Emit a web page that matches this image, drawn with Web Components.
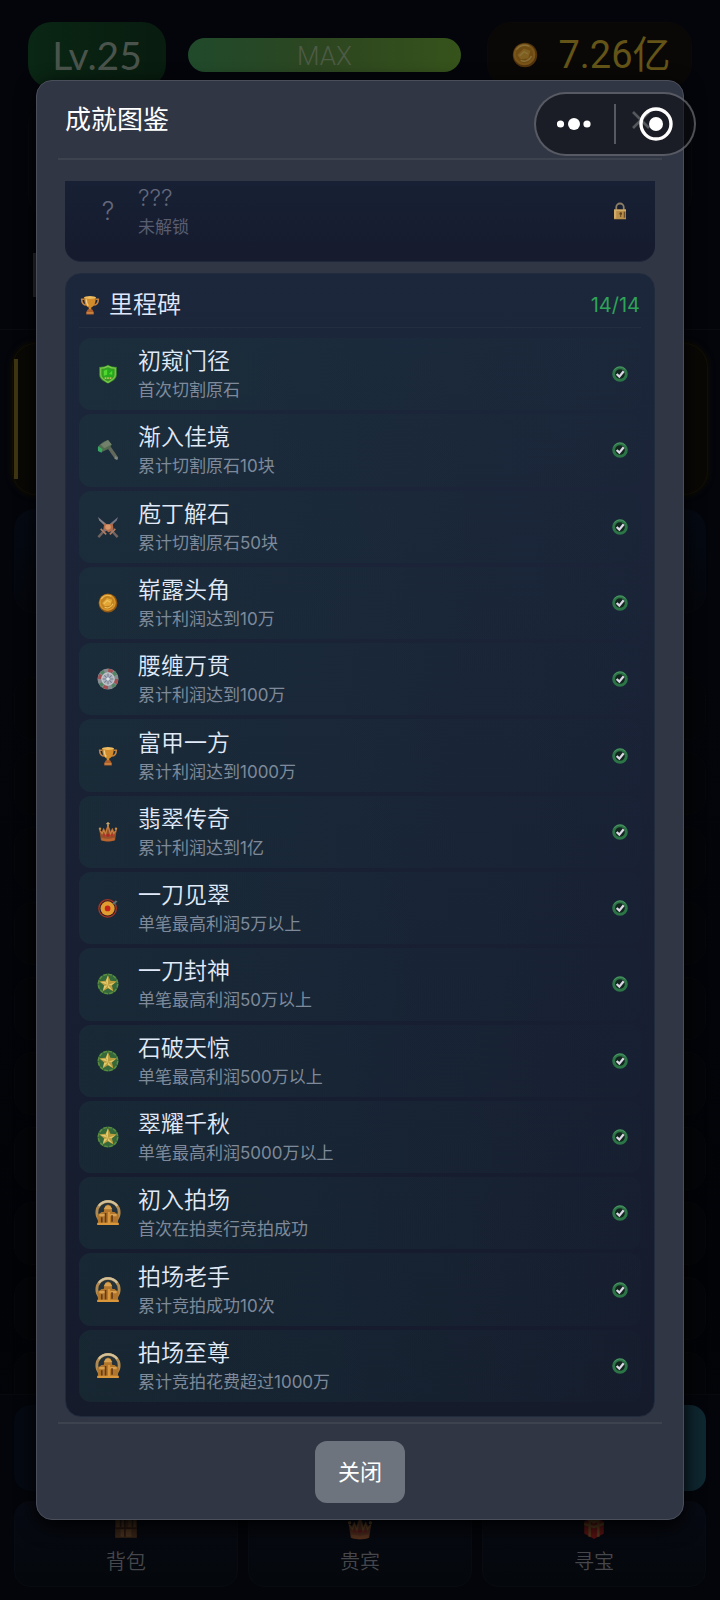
<!DOCTYPE html>
<html lang="zh-CN">
<head>
<meta charset="utf-8">
<meta name="viewport" content="width=device-width, initial-scale=1">
<title>成就图鉴</title>
<style>
  html, body { margin: 0; height: 100%; background: #04050a; }
  body { font-family: Inter, "Noto Sans CJK SC", sans-serif; font-weight: 350; overflow: hidden; }
</style>
</head>
<body>
<game-app></game-app>
<script>
const define = (name, html, setup) => {
  const template = document.createElement('template');
  template.innerHTML = html;
  customElements.define(name, class extends HTMLElement {
    connectedCallback() {
      if (this.shadowRoot) return;
      this.attachShadow({ mode: 'open' }).append(template.content.cloneNode(true));
      if (setup) setup(this, this.shadowRoot);
    }
  });
};

const star = `<circle cx="12" cy="12" r="11.500" fill="#35683a"/><circle cx="12" cy="12" r="10.500" fill="none" stroke="#5b8e40" stroke-width="1.6" stroke-dasharray="4 1.500"/>
  <path d="M12 2.200l2.600 6.300 7 .5-5.300 4.500 1.600 6.700-5.900-3.500-5.900 3.500 1.600-6.700L2.400 9l7-.5z" fill="#b99c3c"/><path d="M12 3v10L9.700 9zm0 10l8.500-3.300-5 3.700zm0 0l5 6-5-3zm0 0l-5.200 6.200 1-5zm0 0L3.500 9.700 9 9.500z" fill="#e0ca70"/>`;
const house = `<circle cx="12" cy="11.500" r="10.300" fill="#263239" stroke="#b08a50" stroke-width="2.600"/><path d="M3.500 5.500A10.600 10.600 0 0 1 20.500 5.500" fill="none" stroke="#d2c19b" stroke-width="2"/>
  <path d="M2 14l4-3h2l1-4 3-3 3 3 1 4h2l4 3-1 8H3z" fill="#b1762b"/><path d="M8 8.500h8l-2-3.500h-4zM4 13h6v2H4zm10 0h6v2h-6z" fill="#d9a04d"/><path d="M9 12h1.500v9H9zm6 2h1.500v6H15zM5.500 16H7v5H5.500z" fill="#653a18"/><path d="M12 11h2v11h-2zM2 21h20v2H2z" fill="#d9963a"/>`;
const cup = `<path d="M5 5H2c0 5 2.500 7 6 7M19 5h3c0 5-2.500 7-6 7" fill="none" stroke="#c08040" stroke-width="1.900"/><path d="M5 2.500h14c0 7-2 11.500-5.500 12.500v3h-3v-3C7 14 5 9.500 5 2.500z" fill="#d38c2b"/><ellipse cx="12" cy="3" rx="7" ry="1.700" fill="#edbb60"/><path d="M7.500 5c.2 4 1 6.500 2.500 8" fill="none" stroke="#f2cd83" stroke-width="1.600"/><path d="M9.500 17h5l2 3.500v3h-9v-3z" fill="#ad5e2b"/><path d="M8 20.500h8v2H8z" fill="#cb8440"/>`;
const crown = `<path d="M1.500 9l3 2 2-4 2 4 3.500-9 3.500 9 2-4 2 4 3-2-2 13c-5 2-12 2-17 0z" fill="#95502b"/><path d="M2 10l3 4 2-5 2 6 3-10 3 10 2-6 2 5 3-4" fill="none" stroke="#c5813f" stroke-width="1.300"/><path d="M12 0v5M10 2h4" stroke="#c9a66d" stroke-width="1.500"/><circle cx="2.400" cy="8" r="1.500" fill="#c78d48"/><circle cx="21.600" cy="8" r="1.500" fill="#c78d48"/><path d="M4 18.500c5 2 11 2 16 0v3.500c-5 1.500-11 1.500-16 0z" fill="#b8652f"/><circle cx="12" cy="16" r="1.800" fill="#ad2823"/><circle cx="7.500" cy="16" r="1.500" fill="#ba3028"/><circle cx="16.500" cy="16" r="1.500" fill="#ba3028"/>`;
const ICONS = {
  star, house, cup, crown,
  shield: `<path d="M12 1c3 2 6 2.500 10.500 2.500V13c0 5-5 8-10.500 10.500C6.500 21 1.500 18 1.500 13V3.500C6 3.500 9 3 12 1z" fill="#3f9527"/><path d="M12 2.800c3 1.700 5.500 2.200 8.700 2.300V13c0 4-4.400 6.800-8.700 9-4.300-2.200-8.700-5-8.700-9V5.100C6.500 5 9 4.500 12 2.800z" fill="none" stroke="#79c94c" stroke-width="1.500"/><path d="M5.500 7l6.500-2 6.500 2v8L12 18l-6.500-3z" fill="#27aa1d"/><path d="M7 8l4-1.500V13l-4 1zM13 12l4-4v5z" fill="#52d630"/><path d="M8 16h2v2H8zm3 0h2v2h-2zm3 0h2v2h-2z" fill="#b5c358"/>`,
  hammer: `<path d="M12 11l3-2.500L23 20l-1 2.500-2.500-1z" fill="#62685c"/><path d="M20 18.500l3 2-1 2.500-3-1.500z" fill="#7b8880"/><path d="M1 9c2-4 7-7 11-8l4 5-2 4-8 4-5-2z" fill="#536a4f"/><path d="M4 6l8-5 4 5-8 4z" fill="#72816b"/><path d="M1 8l5 3-1 4-4-2z" fill="#37a862"/>`,
  swords: `<path d="M1 1l18 15-2.500 2.500L2.500 5z" fill="#85818a"/><path d="M23 1L5 16l2.500 2.500L21.500 5z" fill="#737685"/><path d="M1.500 23l6.500-7M22.500 23L16 16" stroke="#736360" stroke-width="2.600"/><path d="M4 14l6 6M20 14l-6 6" stroke="#b07c62" stroke-width="1.800"/><path d="M8 8l4 1.500L17 8l1 6-5 4-6-4z" fill="#b36c49"/><circle cx="12" cy="12" r="3" fill="#d8976b"/>`,
  coin: `<circle cx="12" cy="12" r="11.300" fill="#8d5716"/><circle cx="11.500" cy="11.500" r="10" fill="#d6942a"/><circle cx="11.500" cy="11.500" r="8" fill="#c1821f"/><path d="M5 12l6-6 6 2-2 7-7 1z" fill="#e1a636"/><path d="M4 7c3-4 8-5 12-3M7 13l4-4 4 2M8 17c4 2 8 0 10-4" fill="none" stroke="#efc45f" stroke-width="1.300"/>`,
  chip: `<circle cx="12" cy="12" r="11.500" fill="#868c8f"/><circle cx="12" cy="12" r="9.300" fill="none" stroke="#a34e51" stroke-width="3.500" stroke-dasharray="5 9.600"/><circle cx="12" cy="12" r="9.300" fill="none" stroke="#4f8562" stroke-width="3.500" stroke-dasharray="4 10.600" stroke-dashoffset="-6"/><circle cx="12" cy="12" r="6.700" fill="#aeb3bc" stroke="#d2d6da"/><path d="M12 6v12M6 12h12M8 8l8 8M16 8l-8 8" stroke="#727e94" stroke-width="1.100"/><circle cx="12" cy="12" r="2" fill="#dfe3e6"/>`,
  target: `<circle cx="11.500" cy="12.500" r="10.500" fill="#35191e" stroke="#a43528" stroke-width="1.600"/><circle cx="11.500" cy="12.500" r="8.500" fill="#e09c30"/><circle cx="11.500" cy="12.500" r="3.400" fill="#c4241c"/><path d="M17 7l4-4 2.500 1-4 4z" fill="#65706b"/>`,
  check: `<circle cx="12" cy="12" r="9.500" fill="#13251f" stroke="#2c7547" stroke-width="4.400"/><path d="M3 6.500A10.600 10.600 0 0 1 20 5" fill="none" stroke="#4f9466" stroke-width="1.500"/><path d="M7 12l4 4 6.500-8" fill="none" stroke="#ddd8e8" stroke-width="3.400"/>`,
  lock: `<path d="M7 12V7a5 5 0 0 1 10 0v5" fill="none" stroke="#8b7f66" stroke-width="2.400"/><path d="M4 10h16v13H4z" fill="#b98e49"/><path d="M4 10h16v2H4zM4 12h3v10H4z" fill="#d0ac68"/><circle cx="13" cy="15.500" r="1.800" fill="#5c4021"/><path d="M12.200 16h1.500v4h-1.500zM17 13h2v8h-2z" fill="#6c4d28"/>`,
  bag: `<path d="M2 2h20v20H2z" fill="#6f431f"/><path d="M3 5h7v8H3zm11 0h7v8h-7zM7 14h10v7H7z" fill="#95602f"/><path d="M11 2v19M2 13h20M7 4v8M18 4v8" stroke="#49250e" stroke-width="1.500"/>`,
  gift: `<path d="M3 7l9-5 9 5v11l-9 5-9-5z" fill="#b91f18"/><path d="M8 4v17M16 4v17M3 9l9 3 9-3" fill="none" stroke="#b17a2d" stroke-width="2.200"/><path d="M12 9L5 5l3-4 4 5 4-5 3 4z" fill="#bf842b"/>`
};

define('game-icon', `<style>:host{display:block;width:20px;height:20px;flex:none}svg{display:block;width:100%;height:100%}</style><svg viewBox="0 0 24 24" aria-hidden="true"></svg>`,
  (host, root) => { root.querySelector('svg').innerHTML = ICONS[host.getAttribute('name')]; });

define('player-status', `<style>
  :host{display:flex;align-items:center;gap:22px;padding:22px 28px 0}
  .level,.money{box-sizing:border-box;height:66px;border-radius:24px;display:flex;align-items:center;justify-content:center}
  .level{width:138px;background:linear-gradient(90deg,#0a2614,#081c0f);color:#4a544c;font:400 39px/66px Lato,sans-serif}
  .bar{flex:1;height:34px;border-radius:17px;background:linear-gradient(90deg,#204a2b,#2d4620 50%,#36531b);text-align:center;color:#4e5b46;font:300 26px/36px Roboto,sans-serif}
  .money{width:205px;margin-left:4px;padding-left:4px;background:#090806;border:1px solid #0c0a07;gap:20px;color:#645417;font:400 38px/66px Roboto,"Noto Sans CJK SC",sans-serif}
  game-icon{width:26px;height:26px;opacity:.55}
</style><div class="level">Lv.25</div><div class="bar">MAX</div><div class="money"><game-icon name="coin"></game-icon><span>7.26亿</span></div>`);

define('game-tab', `<style>
  :host{display:block;flex:1}
  button{box-sizing:border-box;width:100%;height:86px;padding:4px 0 0;border:1px solid #080b12;border-radius:16px;background:linear-gradient(#070a13,#04070b);color:#45474c;font:inherit;font-size:20px;line-height:28px;display:flex;flex-direction:column;align-items:center;gap:8px}
  game-icon{width:26px;height:26px;margin-top:8px;opacity:.45}
</style><button type="button"><game-icon></game-icon><slot></slot></button>`,
  (host, root) => {
    const icon = document.createElement('game-icon');
    icon.setAttribute('name', host.getAttribute('icon'));
    root.querySelector('game-icon').replaceWith(icon);
  });

define('game-backdrop', `<style>
  :host{display:flex;flex-direction:column;height:100%;background:linear-gradient(#04050b,#03050b 40%,#020307 80%,#04050a)}
  .scene{flex:1;min-height:0;overflow:hidden;display:flex;flex-direction:column}
  .scene>*{flex:none;box-sizing:border-box}
  .profile{height:112px;margin:16px 28px 0;border-radius:20px;border:1px solid #080a10;background:#04060b}
  .mark{width:8px;height:44px;margin:37px 0 32px 33px;background:#2a2d35}
  hr{width:100%;margin:0;border:0;border-top:1px solid #0a0b10}
  .order{height:152px;margin:13px 12px 14px;padding:15px 0 15px 1px;border:1px solid #141003;border-radius:24px;background:#090805;box-shadow:0 0 6px #141002}
  .order i{display:block;width:4px;height:100%;background:#3e3512}
  .tip{height:104px;margin:0 14px 64px;border-radius:20px;background:linear-gradient(#050a14,#04060b);border:1px solid #060910}
  .entry{height:63px;margin:0 14px 12px;border-radius:18px;background:#040508;border:1px solid #07080b}
  footer{padding:10px 14px 13px;border-top:1px solid #08090d;background:#03050a}
  .actions,.tabs{display:flex;gap:10px}
  .actions{margin-bottom:10px}
  .actions i{flex:1;height:86px;border-radius:16px;background:#050911}
  .actions i:last-child{background:#0f2731}
</style>
<player-status></player-status>
<div class="scene"><div class="profile"></div><div class="mark"></div><hr><div class="order"><i></i></div><div class="tip"></div></div>
<footer><div class="actions"><i></i><i></i></div><div class="tabs"><game-tab icon="bag">背包</game-tab><game-tab icon="crown">贵宾</game-tab><game-tab icon="gift">寻宝</game-tab></div></footer>`,
  (host, root) => {
    for (let i = 0; i < 10; i++) {
      const entry = document.createElement('div');
      entry.className = 'entry';
      root.querySelector('.scene').append(entry);
    }
  });

define('achievement-row', `<style>
  :host{box-sizing:border-box;display:flex;align-items:center;padding:8px 13px 8px 12px;border-radius:12px;background:linear-gradient(90deg,rgba(27,60,62,.36),rgba(25,52,62,.32) 45%,rgba(24,42,58,.12))}
  :host([locked]){background:none;color:#64687b}
  .icon{width:34px;display:grid;place-items:center;font-size:25px}
  .text{flex:1;min-width:0;margin-left:13px;display:grid;gap:2px}
  .name{font-size:23px;line-height:30px;color:#e1eaf8;font-weight:350}
  .desc{font-size:17px;line-height:24px;color:#7e8a9a;font-weight:400}
  :host([locked]) .name{color:#64687b}
  :host([locked]) .desc{color:#595e70}
  .state{width:16px;height:16px}
  :host([locked]) .state{width:18px;height:18px}
</style><div class="icon"></div><div class="text"><div class="name"><slot name="name"></slot></div><div class="desc"><slot></slot></div></div>`,
  (host, root) => {
    const add = (name, cls, parent) => {
      const icon = document.createElement('game-icon');
      icon.setAttribute('name', name);
      icon.className = cls;
      parent.append(icon);
      return icon;
    };
    const box = root.querySelector('.icon');
    const name = host.getAttribute('icon');
    if (name) {
      const icon = add(name, '', box);
      if (name === 'house') icon.style.cssText = 'width:26px;height:26px';
      if (name === 'star' || name === 'chip' || name === 'hammer' || name === 'swords') icon.style.cssText = 'width:22px;height:22px';
    } else box.textContent = '?';
    add(host.hasAttribute('locked') ? 'lock' : 'check', 'state', root);
  });

define('achievement-section', `<style>
  :host{box-sizing:border-box;display:flex;flex-direction:column;padding:12px 13px 14px;border:1px solid #202b3e;border-radius:16px;background:linear-gradient(#1c273b,#1b2438 20%,#181f33 60%,#151b2b)}
  header{box-sizing:border-box;display:flex;align-items:center;gap:9px;height:42px;border-bottom:1px solid #232e41;margin-bottom:10px;padding:0 1px 3px}
  h3{margin:0;flex:1;font-size:24px;line-height:34px;font-weight:350;color:#e1e8fb}
  output{font-size:20px;color:#2ea458;font-weight:400}
  .list{flex:1;display:grid;grid-auto-rows:1fr;gap:4px}
</style><header><game-icon name="cup"></game-icon><h3><slot name="title"></slot></h3><output><slot name="count"></slot></output></header><div class="list"><slot></slot></div>`);

define('achievement-dialog', `<style>
  :host{box-sizing:border-box;width:90%;height:90%;display:flex;flex-direction:column;padding:0 21px;border:1px solid #4a4e5b;border-radius:16px;background:#313645;box-shadow:0 6px 20px #000;color:#fff}
  header{box-sizing:border-box;height:79px;flex:none;display:flex;align-items:center;justify-content:space-between;padding:0 9px 0 7px;border-bottom:2px solid #3e4350}
  h2{margin:0;font-size:26px;line-height:36px;font-weight:400}
  header button{width:24px;height:24px;padding:0;border:0;background:none;color:#c4c6cc}
  header svg{display:block;width:24px;height:24px}
  .body{flex:1;min-height:0;display:flex;flex-direction:column;gap:11px;padding:21px 7px 5px;overflow:hidden}
  .previous{flex:none;box-sizing:border-box;height:81px;padding:0 14px;border-radius:0 0 16px 16px;background:linear-gradient(#172034,#161b2d);border-bottom:1px solid #1f273a}
  .previous achievement-row{height:60px;padding:0 12px}
  achievement-section{flex:1}
  footer{flex:none;border-top:2px solid #3e4350;padding:17px 0 16px;display:flex;justify-content:center}
  footer button{box-sizing:border-box;height:62px;padding:0 23px;border:0;border-radius:12px;background:#6d747e;color:#fff;font:inherit;font-weight:400;font-size:22px;line-height:32px}
</style>
<header><h2>成就图鉴</h2><button type="button" aria-label="关闭"><svg viewBox="0 0 24 24"><path d="M4 4l16 16M20 4L4 20" fill="none" stroke="currentColor" stroke-width="2.600"/></svg></button></header>
<div class="body">
  <div class="previous"><achievement-row locked><span slot="name">???</span>未解锁</achievement-row></div>
  <achievement-section><span slot="title">里程碑</span><span slot="count">14/14</span></achievement-section>
</div>
<footer><button type="button">关闭</button></footer>`,
  (host, root) => {
    const rows = [
      ['shield', '初窥门径', '首次切割原石'], ['hammer', '渐入佳境', '累计切割原石10块'],
      ['swords', '庖丁解石', '累计切割原石50块'], ['coin', '崭露头角', '累计利润达到10万'],
      ['chip', '腰缠万贯', '累计利润达到100万'], ['cup', '富甲一方', '累计利润达到1000万'],
      ['crown', '翡翠传奇', '累计利润达到1亿'], ['target', '一刀见翠', '单笔最高利润5万以上'],
      ['star', '一刀封神', '单笔最高利润50万以上'], ['star', '石破天惊', '单笔最高利润500万以上'],
      ['star', '翠耀千秋', '单笔最高利润5000万以上'], ['house', '初入拍场', '首次在拍卖行竞拍成功'],
      ['house', '拍场老手', '累计竞拍成功10次'], ['house', '拍场至尊', '累计竞拍花费超过1000万']
    ];
    root.querySelector('achievement-section').append(...rows.map(([icon, name, desc]) => {
      const row = document.createElement('achievement-row');
      row.setAttribute('icon', icon);
      const title = document.createElement('span');
      title.slot = 'name';
      title.textContent = name;
      row.append(title, desc);
      return row;
    }));
  });

define('window-capsule', `<style>
  :host{box-sizing:border-box;display:flex;align-items:center;width:162px;height:64px;border:2px solid rgba(150,152,160,.5);border-radius:32px;background:rgba(13,14,19,.6)}
  button{flex:1;height:60px;padding:0;border:0;background:none;display:grid;place-items:center;color:#fff}
  i{width:2px;height:40px;background:#565963}
  svg{display:block;width:36px;height:36px;fill:currentColor}
</style>
<button type="button" aria-label="更多"><svg viewBox="0 0 36 36"><circle cx="3.500" cy="18" r="3.600"/><circle cx="17" cy="18" r="6"/><circle cx="30" cy="18" r="3.600"/></svg></button><i></i>
<button type="button" aria-label="退出"><svg viewBox="0 0 36 36"><circle cx="19" cy="18" r="15" fill="none" stroke="currentColor" stroke-width="3.400"/><circle cx="19" cy="18" r="7"/></svg></button>`);

define('game-app', `<style>
  :host{display:block;position:relative;height:100vh;overflow:hidden}
  .overlay{position:absolute;inset:0;display:flex;align-items:center;justify-content:center}
  window-capsule{position:absolute;top:92px;right:24px}
</style><game-backdrop></game-backdrop><div class="overlay"><achievement-dialog></achievement-dialog></div><window-capsule></window-capsule>`);
</script>
</body>
</html>
